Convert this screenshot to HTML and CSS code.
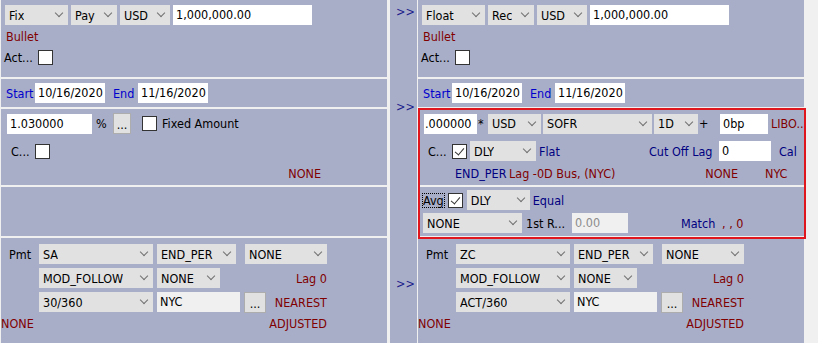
FILE: index.html
```html
<!doctype html>
<html>

<head>
	<title>Swap Legs</title>
	<link rel="stylesheet" href="styles.css">
</head>

<body>
	<div class="form">
		<!-- fixed leg -->
		<div class="leg">
			<div class="sec sec-main">
				<div class="row head-row">
					<div class="cmb w-type"><span>Fix</span></div>
					<div class="cmb w-side"><span>Pay</span></div>
					<div class="cmb w-ccy"><span>USD</span></div>
					<div class="txt w-amt">1,000,000.00</div>
				</div>
				<div class="note red">Bullet</div>
				<div class="row act-row"><span class="act-lbl">Act...</span><span class="chk"></span></div>
			</div>
			<div class="sec sec-dates">
				<div class="row dates-row">
					<span class="blue d-start">Start</span>
					<div class="txt w-date">10/16/2020</div>
					<span class="blue d-end">End</span>
					<div class="txt w-date">11/16/2020</div>
				</div>
			</div>
			<div class="sec sec-rate">
				<div class="row rate-row">
					<div class="txt w-rate">1.030000</div>
					<span class="pct">%</span>
					<div class="btn">...</div>
					<span class="chk fixed-chk"></span>
					<span class="fixed-lbl">Fixed Amount</span>
				</div>
				<div class="row comp-row">
					<span class="c-lbl">C...</span><span class="chk"></span>
				</div>
				<div class="row info-row">
					<span class="red i-none i-none-solo">NONE</span>
				</div>
			</div>
			<div class="sec sec-avg"></div>
			<div class="sec sec-pmt">
				<div class="row pmt-row">
					<span class="pmt-lbl">Pmt</span>
					<div class="cmb w-freq"><span>SA</span></div>
					<div class="cmb w-roll"><span>END_PER</span></div>
					<div class="cmb w-stub"><span>NONE</span></div>
				</div>
				<div class="row pmt-row">
					<div class="cmb w-freq indent"><span>MOD_FOLLOW</span></div>
					<div class="cmb w-adj"><span>NONE</span></div>
					<span class="red push">Lag 0</span>
				</div>
				<div class="row pmt-row">
					<div class="cmb w-freq indent"><span>30/360</span></div>
					<div class="txt ro w-cal">NYC</div>
					<div class="btn btn-cal">...</div>
					<span class="red push">NEAREST</span>
				</div>
				<div class="row foot-row">
					<span class="red">NONE</span>
					<span class="red push">ADJUSTED</span>
				</div>
			</div>
		</div>

		<div class="gutter">
			<span class="arrow a1">&gt;&gt;</span>
			<span class="arrow a2">&gt;&gt;</span>
			<span class="arrow a3">&gt;&gt;</span>
		</div>

		<!-- float leg -->
		<div class="leg">
			<div class="sec sec-main">
				<div class="row head-row">
					<div class="cmb w-type"><span>Float</span></div>
					<div class="cmb w-side"><span>Rec</span></div>
					<div class="cmb w-ccy"><span>USD</span></div>
					<div class="txt w-amt">1,000,000.00</div>
				</div>
				<div class="note red">Bullet</div>
				<div class="row act-row"><span class="act-lbl">Act...</span><span class="chk"></span></div>
			</div>
			<div class="sec sec-dates">
				<div class="row dates-row">
					<span class="blue d-start">Start</span>
					<div class="txt w-date">10/16/2020</div>
					<span class="blue d-end">End</span>
					<div class="txt w-date">11/16/2020</div>
				</div>
			</div>
			<div class="sec sec-rate">
				<div class="row rate-row">
					<div class="txt w-mult">.000000</div>
					<span class="op">*</span>
					<div class="cmb w-ccy2"><span>USD</span></div>
					<div class="cmb w-index"><span>SOFR</span></div>
					<div class="cmb w-tenor"><span>1D</span></div>
					<span class="op op-plus">+</span>
					<div class="txt w-bp">0bp</div>
					<span class="red idx">LIBO..</span>
				</div>
				<div class="row comp-row">
					<span class="c-lbl">C...</span><span class="chk on"></span>
					<div class="cmb w-cfreq"><span>DLY</span></div>
					<span class="navy flat">Flat</span>
					<span class="navy cut">Cut Off Lag</span>
					<div class="txt w-lag">0</div>
					<span class="navy cal">Cal</span>
				</div>
				<div class="row info-row">
					<span class="navy i-conv">END_PER</span>
					<span class="red i-lag">Lag -0D Bus, (NYC)</span>
					<span class="red i-none">NONE</span>
					<span class="red i-cal">NYC</span>
				</div>
			</div>
			<div class="sec sec-avg">
				<div class="row avg-row">
					<span class="focus">Avg</span>
					<span class="chk on"></span>
					<div class="cmb w-afreq"><span>DLY</span></div>
					<span class="navy equal">Equal</span>
				</div>
				<div class="row avg-row second">
					<div class="cmb w-reset"><span>NONE</span></div>
					<span class="first-lbl">1st R...</span>
					<div class="txt off w-first">0.00</div>
					<span class="navy match">Match</span>
					<span class="red">, , 0</span>
				</div>
			</div>
			<div class="sec sec-pmt">
				<div class="row pmt-row">
					<span class="pmt-lbl">Pmt</span>
					<div class="cmb w-freq"><span>ZC</span></div>
					<div class="cmb w-roll"><span>END_PER</span></div>
					<div class="cmb w-stub"><span>NONE</span></div>
				</div>
				<div class="row pmt-row">
					<div class="cmb w-freq indent"><span>MOD_FOLLOW</span></div>
					<div class="cmb w-adj"><span>NONE</span></div>
					<span class="red push">Lag 0</span>
				</div>
				<div class="row pmt-row">
					<div class="cmb w-freq indent"><span>ACT/360</span></div>
					<div class="txt ro w-cal">NYC</div>
					<div class="btn btn-cal">...</div>
					<span class="red push">NEAREST</span>
				</div>
				<div class="row foot-row">
					<span class="red">NONE</span>
					<span class="red push">ADJUSTED</span>
				</div>
			</div>
			<div class="focus-box"></div>
		</div>
	</div>
</body>

</html>
```

FILE: styles.css
```css
body {
	margin: 0;
	background: #f0f0f0;
	font-family: 'DejaVu Sans Condensed', 'Liberation Sans', sans-serif;
	font-size: 12.5px;
	line-height: 15px;
	color: #000;
}

.form {
	display: flex;
	height: 343px;
	padding-left: 1px;
	overflow: hidden;
}

.leg {
	position: relative;
	display: flex;
	flex-direction: column;
	gap: 2px;
	width: 386px;
	flex: none;
}

.sec {
	background: #a9aec8;
	flex: none;
	overflow: hidden;
}

.sec-main { height: 77px; }
.sec-dates { height: 28px; }
.sec-rate { height: 76px; }
.sec-avg { height: 49px; }
.sec-pmt { flex: 1; }

.gutter {
	display: flex;
	flex-direction: column;
	width: 27px;
	margin: 0 1px 0 3px;
	padding: 4px 0 0 6px;
	box-sizing: border-box;
	background: #a9aec8;
	color: #1c1c8c;
}

.a2 { margin-top: 80px; }
.a3 { margin-top: 162px; }

.focus-box {
	position: absolute;
	left: 0;
	top: 108px;
	width: 388px;
	height: 131px;
	border: 2px solid #e0161e;
	box-sizing: border-box;
}

/* text colours */
.red { color: #800000; }
.blue { color: #0000cd; }
.navy { color: #000080; }

.row {
	display: flex;
	align-items: center;
	white-space: nowrap;
}

/* controls */
.cmb {
	display: flex;
	align-items: center;
	justify-content: space-between;
	height: 20px;
	padding: 0 6px 0 4px;
	box-sizing: border-box;
	background: #e1e1e1;
	flex: none;
}

.cmb span {
	overflow: hidden;
}

.cmb::after {
	content: '';
	width: 5px;
	height: 5px;
	margin-top: -4px;
	border-right: 1px solid #707070;
	border-bottom: 1px solid #707070;
	transform: rotate(45deg);
	flex: none;
}

.txt {
	height: 20px;
	line-height: 20px;
	padding-left: 3px;
	box-sizing: border-box;
	background: #fff;
	flex: none;
	overflow: hidden;
}

.txt.ro { background: #f0f0f0; }
.txt.off { background: #f0f0f0; color: #8c8c8c; }

.btn {
	width: 18px;
	height: 21px;
	line-height: 21px;
	border: 1px solid #adadad;
	box-sizing: border-box;
	background: #e1e1e1;
	text-align: center;
	flex: none;
}

.chk {
	position: relative;
	width: 15px;
	height: 15px;
	border: 1px solid #333;
	box-sizing: border-box;
	background: #fff;
	flex: none;
}

.chk.on::after {
	content: '';
	position: absolute;
	left: 4px;
	top: 1px;
	width: 4px;
	height: 8px;
	border-right: 1px solid #333;
	border-bottom: 1px solid #333;
	transform: rotate(40deg);
}

/* top section */
.head-row {
	padding: 5px 0 0 4px;
	gap: 3px;
}

.w-type { width: 63px; }
.w-side { width: 46px; }
.w-ccy { width: 50px; }
.w-amt { width: 139px; }

.note {
	margin-top: 4px;
	padding-left: 5px;
}

.act-row {
	margin-top: 6px;
	padding-left: 3px;
	height: 15px;
}

.act-lbl { width: 34px; }

/* dates */
.dates-row {
	height: 28px;
	padding-left: 5px;
}

.d-start { width: 29px; }
.w-date { width: 70px; }
.d-end { width: 25px; margin-left: 8px; }

/* rate */
.rate-row {
	height: 21px;
	margin-top: 4px;
	padding-left: 6px;
}

.w-rate { width: 85px; }
.pct { width: 17px; margin-left: 4px; }
.fixed-chk { margin-left: 11px; }
.fixed-lbl { margin-left: 5px; }

.w-mult { width: 53px; padding-left: 1px; }
.op { width: 11px; padding-left: 1px; box-sizing: border-box; }
.op-plus { width: 22px; }
.w-ccy2 { width: 53px; }
.w-index { width: 109px; margin-left: 2px; }
.w-tenor { width: 44px; margin-left: 2px; }
.w-bp { width: 48px; }
.idx { margin-left: 3px; }

.comp-row {
	height: 20px;
	margin-top: 7px;
	padding-left: 10px;
}

.c-lbl { width: 24px; }
.w-cfreq { width: 66px; margin-left: 3px; }
.flat { width: 110px; margin-left: 3px; }
.cut { width: 70px; }
.w-lag { width: 52px; }
.cal { margin-left: 8px; }

.info-row {
	margin-top: 5px;
	padding-left: 37px;
}

.i-conv { width: 54px; }
.i-lag { width: 160px; }
.i-none { width: 69px; text-align: right; }
.i-none-solo { margin-left: 214px; }
.i-cal { margin-left: 27px; }

/* averaging */
.avg-row {
	height: 20px;
	margin-top: 3px;
	padding-left: 4px;
}

.avg-row.second {
	padding-left: 5px;
}

.focus {
	border: 1px dotted #000;
	line-height: 13px;
}

.avg-row .chk { margin-left: 3px; }
.w-afreq { width: 63px; margin-left: 4px; }
.equal { margin-left: 3px; }
.w-reset { width: 99px; }
.first-lbl { width: 46px; margin-left: 4px; }
.w-first { width: 56px; }
.match { width: 41px; margin-left: 53px; }

/* payment */
.sec-pmt {
	padding-top: 6px;
}

.pmt-row {
	width: 326px;
	height: 20px;
	margin-bottom: 4px;
}

.pmt-lbl {
	width: 38px;
	padding-left: 8px;
	box-sizing: border-box;
}

.indent { margin-left: 38px; }
.w-freq { width: 114px; }
.w-roll { width: 79px; margin-left: 4px; }
.w-stub { width: 82px; margin-left: 9px; }
.w-adj { width: 63px; margin-left: 4px; }
.w-cal { width: 83px; margin-left: 4px; }
.btn-cal { width: 22px; margin-left: 4px; }

.push { margin-left: auto; }

.foot-row {
	width: 326px;
	margin-top: 2px;
}
```
